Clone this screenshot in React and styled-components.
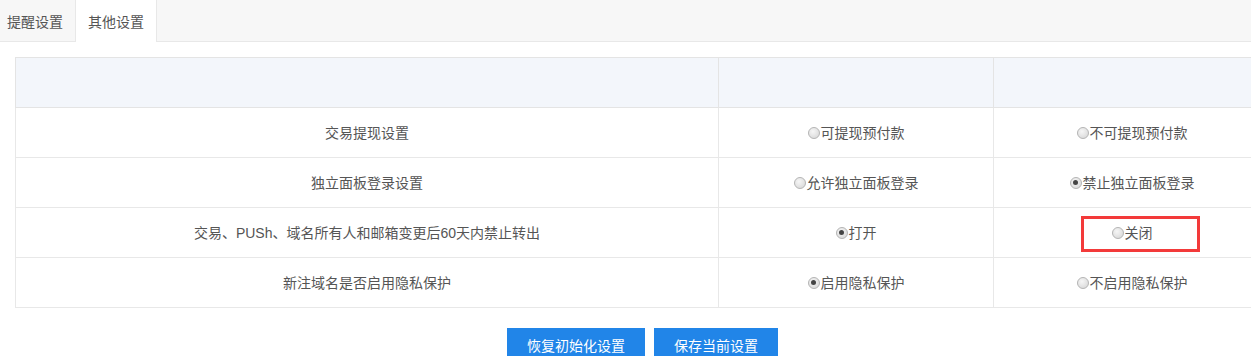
import React, { useState } from 'react';
import styled, { createGlobalStyle } from 'styled-components';

const GlobalStyle = createGlobalStyle`
  body {
    margin: 0;
    background: #fff;
    font-family: "Liberation Sans", "Noto Sans CJK SC", sans-serif;
    color: #555;
    overflow: hidden;
  }
`;

const TabBar = styled.div`
  display: flex;
  height: 41px;
  margin-left: -5px;
  background: #f7f7f7;
  border-bottom: 1px solid #e8e8e8;
`;

const Tab = styled.div`
  display: flex;
  align-items: center;
  padding: 0 12px;
  height: 42px;
  box-sizing: border-box;
  font-size: 14px;
  color: #555;
  background: ${p => (p.active ? '#fff' : 'transparent')};
  border-right: 1px solid #e8e8e8;
  margin-bottom: ${p => (p.active ? '-1px' : '0')};
`;

const Content = styled.div`
  width: 1255px;
  padding: 15px 15px 0;
`;

const Table = styled.table`
  width: 100%;
  border-collapse: collapse;
  table-layout: fixed;
  font-size: 14px;
  line-height: 20px;
`;

const Col = styled.col`
  width: ${p => p.width}px;
`;

const HeadCell = styled.th`
  height: 49px;
  padding: 0;
  background: #f3f6fb;
  border: 1px solid #e4e4e4;
`;

const Cell = styled.td`
  height: 49px;
  border: 1px solid #e8e8e8;
  text-align: center;
  color: #555;
  padding: 0;
`;

const RadioLabel = styled.label`
  display: inline-flex;
  align-items: center;
  vertical-align: top;
  cursor: pointer;
  position: relative;
`;

const Dot = styled.span`
  width: 12px;
  height: 12px;
  border-radius: 50%;
  box-sizing: border-box;
  border: 1px solid #b5b5b5;
  background: radial-gradient(circle at 40% 35%, #f6f6f6 0%, #d4d4d4 100%);
  display: inline-flex;
  align-items: center;
  justify-content: center;
  margin-right: 1px;

  &::after {
    content: '';
    width: 5px;
    height: 5px;
    border-radius: 50%;
    background: #444;
    display: ${p => (p.checked ? 'block' : 'none')};
  }
`;

const Highlight = styled.span`
  position: absolute;
  left: -31px;
  top: 50%;
  margin-top: -17px;
  width: 119px;
  height: 36px;
  box-sizing: border-box;
  border: 3px solid #f33a3a;
  pointer-events: none;
`;

const Actions = styled.div`
  display: flex;
  justify-content: center;
  gap: 9px;
  margin-top: 20px;
`;

const Button = styled.button`
  height: 34px;
  padding: 0 20px;
  border: none;
  background: #2185e8;
  color: #fff;
  font-size: 14px;
  font-family: inherit;
  cursor: pointer;
`;

const rows = [
  { label: '交易提现设置', options: ['可提现预付款', '不可提现预付款'], value: null },
  { label: '独立面板登录设置', options: ['允许独立面板登录', '禁止独立面板登录'], value: 1 },
  { label: '交易、PUSh、域名所有人和邮箱变更后60天内禁止转出', options: ['打开', '关闭'], value: 0, mark: 1 },
  { label: '新注域名是否启用隐私保护', options: ['启用隐私保护', '不启用隐私保护'], value: 0 }
];

function Radio({ checked, children, marked, onClick }) {
  return (
    <RadioLabel onClick={onClick}>
      <Dot checked={checked} />
      {children}
      {marked && <Highlight />}
    </RadioLabel>
  );
}

export default function App() {
  const [values, setValues] = useState(rows.map(r => r.value));

  return (
    <>
      <GlobalStyle />
      <TabBar>
        <Tab>提醒设置</Tab>
        <Tab active>其他设置</Tab>
      </TabBar>
      <Content>
        <Table>
          <colgroup>
            <Col width={703} />
            <Col width={275} />
            <Col width={277} />
          </colgroup>
          <thead>
            <tr>
              <HeadCell />
              <HeadCell />
              <HeadCell />
            </tr>
          </thead>
          <tbody>
            {rows.map((row, i) => (
              <tr key={row.label}>
                <Cell>{row.label}</Cell>
                {row.options.map((opt, j) => (
                  <Cell key={opt}>
                    <Radio
                      checked={values[i] === j}
                      marked={row.mark === j}
                      onClick={() => setValues(v => v.map((x, k) => (k === i ? j : x)))}
                    >
                      {opt}
                    </Radio>
                  </Cell>
                ))}
              </tr>
            ))}
          </tbody>
        </Table>
        <Actions>
          <Button>恢复初始化设置</Button>
          <Button>保存当前设置</Button>
        </Actions>
      </Content>
    </>
  );
}
